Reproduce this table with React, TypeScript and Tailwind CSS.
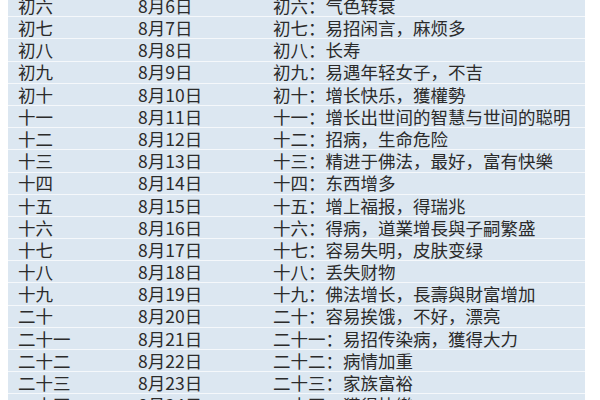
import React from 'react';

const rows: [string, string, string][] = [
  ['初六', '8月6日', '初六：气色转衰'],
  ['初七', '8月7日', '初七：易招闲言，麻烦多'],
  ['初八', '8月8日', '初八：长寿'],
  ['初九', '8月9日', '初九：易遇年轻女子，不吉'],
  ['初十', '8月10日', '初十：增长快乐，獲權勢'],
  ['十一', '8月11日', '十一：增长出世间的智慧与世间的聪明'],
  ['十二', '8月12日', '十二：招病，生命危险'],
  ['十三', '8月13日', '十三：精进于佛法，最好，富有快樂'],
  ['十四', '8月14日', '十四：东西增多'],
  ['十五', '8月15日', '十五：增上福报，得瑞兆'],
  ['十六', '8月16日', '十六：得病，道業增長與子嗣繁盛'],
  ['十七', '8月17日', '十七：容易失明，皮肤变绿'],
  ['十八', '8月18日', '十八：丢失财物'],
  ['十九', '8月19日', '十九：佛法增长，長壽與財富增加'],
  ['二十', '8月20日', '二十：容易挨饿，不好，漂亮'],
  ['二十一', '8月21日', '二十一：易招传染病，獲得大力'],
  ['二十二', '8月22日', '二十二：病情加重'],
  ['二十三', '8月23日', '二十三：家族富裕'],
  ['二十四', '8月24日', '二十四：獲得快樂'],
];

export default function App() {
  return (
    <div
      className="w-[600px] h-[400px] overflow-hidden bg-white"
      style={{ fontFamily: '"Noto Sans CJK SC", "Noto Sans", sans-serif' }}
    >
      {/* table is cropped at the top, first row only half visible */}
      <div className="ml-[8px] mt-[-5px] w-[577px] bg-[#dce7f1] text-[#2b2b2b] text-[17.5px]">
        {rows.map(([day, date, note]) => (
          <div
            key={day}
            className="flex items-center h-[22.2px] border-b border-white/70 leading-none"
          >
            <span className="w-[130px] pl-[10px]">{day}</span>
            <span className="w-[135px]">{date}</span>
            <span className="flex-1">{note}</span>
          </div>
        ))}
      </div>
    </div>
  );
}
